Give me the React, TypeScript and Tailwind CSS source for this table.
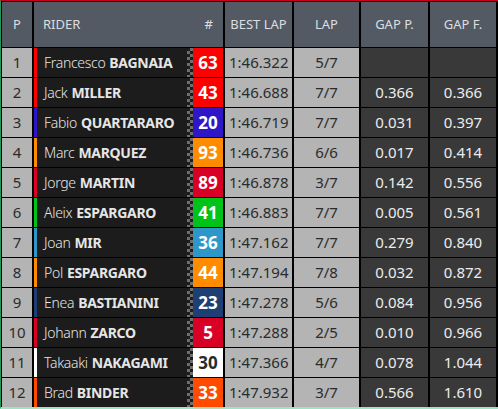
import React from 'react';

type Row = {
  pos: number;
  first: string;
  last: string;
  num: string;
  bar: string;
  box: string;
  boxText?: string;
  best: string;
  lap: string;
  gapP: string;
  gapF: string;
};

const rows: Row[] = [
  { pos: 1, first: 'Francesco', last: 'BAGNAIA', num: '63', bar: 'bg-[#ff0000]', box: 'bg-[#ff0000]', best: '1:46.322', lap: '5/7', gapP: '', gapF: '' },
  { pos: 2, first: 'Jack', last: 'MILLER', num: '43', bar: 'bg-[#ff0000]', box: 'bg-[#ff0000]', best: '1:46.688', lap: '7/7', gapP: '0.366', gapF: '0.366' },
  { pos: 3, first: 'Fabio', last: 'QUARTARARO', num: '20', bar: 'bg-[#2f17c8]', box: 'bg-[#2f17c8]', best: '1:46.719', lap: '7/7', gapP: '0.031', gapF: '0.397' },
  { pos: 4, first: 'Marc', last: 'MARQUEZ', num: '93', bar: 'bg-[#ff8c00]', box: 'bg-[#ff8c00]', best: '1:46.736', lap: '6/6', gapP: '0.017', gapF: '0.414' },
  { pos: 5, first: 'Jorge', last: 'MARTIN', num: '89', bar: 'bg-[#d90025]', box: 'bg-[#d90025]', best: '1:46.878', lap: '3/7', gapP: '0.142', gapF: '0.556' },
  { pos: 6, first: 'Aleix', last: 'ESPARGARO', num: '41', bar: 'bg-[#00c31a]', box: 'bg-[#00c31a]', best: '1:46.883', lap: '7/7', gapP: '0.005', gapF: '0.561' },
  { pos: 7, first: 'Joan', last: 'MIR', num: '36', bar: 'bg-[#2e97c9]', box: 'bg-[#2e97c9]', best: '1:47.162', lap: '7/7', gapP: '0.279', gapF: '0.840' },
  { pos: 8, first: 'Pol', last: 'ESPARGARO', num: '44', bar: 'bg-[#ff8c00]', box: 'bg-[#ff8c00]', best: '1:47.194', lap: '7/8', gapP: '0.032', gapF: '0.872' },
  { pos: 9, first: 'Enea', last: 'BASTIANINI', num: '23', bar: 'bg-[#1d3f74]', box: 'bg-[#1d3f74]', best: '1:47.278', lap: '5/6', gapP: '0.084', gapF: '0.956' },
  { pos: 10, first: 'Johann', last: 'ZARCO', num: '5', bar: 'bg-[#d90025]', box: 'bg-[#d90025]', best: '1:47.288', lap: '2/5', gapP: '0.010', gapF: '0.966' },
  { pos: 11, first: 'Takaaki', last: 'NAKAGAMI', num: '30', bar: 'bg-white', box: 'bg-white', boxText: 'text-[#2a2a2a]', best: '1:47.366', lap: '4/7', gapP: '0.078', gapF: '1.044' },
  { pos: 12, first: 'Brad', last: 'BINDER', num: '33', bar: 'bg-[#ff4b00]', box: 'bg-[#ff4b00]', best: '1:47.932', lap: '3/7', gapP: '0.566', gapF: '1.610' },
];

const cols = 'grid grid-cols-[30px_189px_67px_65px_67px_66px] gap-x-[2px]';

export default function App() {
  return (
    <div className="h-[409px] w-[498px] overflow-hidden border-t border-l border-b-2 border-t-[#c8001e] border-l-[#1f9a5a] border-b-[#9fe3c7] bg-black pt-px pl-px font-['Noto_Sans',sans-serif]">
      <div className={`${cols} h-[45px] text-[13px] text-[#dcdee0]`}>
        <div className="flex items-center justify-center bg-[#535a63]">P</div>
        <div className="flex items-center justify-between bg-[#535a63] pl-[9px] pr-[10px]">
          <span>RIDER</span>
          <span>#</span>
        </div>
        <div className="flex items-center justify-center bg-[#535a63]">BEST LAP</div>
        <div className="flex items-center justify-center bg-[#535a63]">LAP</div>
        <div className="flex items-center justify-center bg-[#535a63]">GAP P.</div>
        <div className="flex items-center justify-center bg-[#535a63]">GAP F.</div>
      </div>
      {rows.map((r) => (
        <div key={r.pos} className={`${cols} mt-px h-[29px] text-[15px]`}>
          <div className="flex items-center justify-center bg-[#b4b4b4] text-[#2b2b2b]">{r.pos}</div>
          <div className="flex bg-[#1c1c1c]">
            <div className={`w-[3px] ${r.bar}`} />
            <div className="flex flex-1 items-center whitespace-nowrap pl-[7px] text-[14px] tracking-[-0.3px] text-[#e6e6e6]">
              <span className="font-light">{r.first}</span>
              <span className="ml-[4px] font-bold">{r.last}</span>
            </div>
            <div className="w-[6px] bg-[conic-gradient(#6f6f6f_90deg,transparent_90deg_180deg,#6f6f6f_180deg_270deg,transparent_270deg)] bg-[length:6px_6px]" />
            <div className={`flex w-[30px] items-center justify-center text-[17px] font-bold ${r.box} ${r.boxText ?? 'text-white'}`}>
              {r.num}
            </div>
          </div>
          <div className="flex items-center bg-[#b4b4b4] pl-[4px] text-[#2b2b2b]">{r.best}</div>
          <div className="flex items-center justify-center bg-[#b4b4b4] text-[#2b2b2b]">{r.lap}</div>
          <div className="flex items-center justify-center bg-[#393939] text-[#ececec]">{r.gapP}</div>
          <div className="flex items-center justify-center bg-[#393939] text-[#ececec]">{r.gapF}</div>
        </div>
      ))}
    </div>
  );
}
